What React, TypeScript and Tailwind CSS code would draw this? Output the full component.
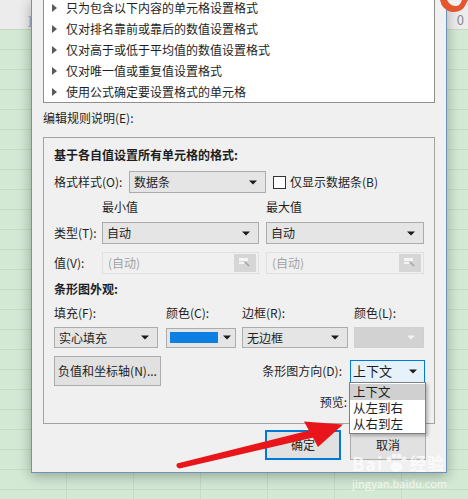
const font = "font-['Noto_Sans_CJK_SC','Noto_Sans',sans-serif]";

const rules = [
  "只为包含以下内容的单元格设置格式",
  "仅对排名靠前或靠后的数值设置格式",
  "仅对高于或低于平均值的数值设置格式",
  "仅对唯一值或重复值设置格式",
  "使用公式确定要设置格式的单元格",
];

// small black caret used by every combo box
const DownArrow = ({ color = "#1b1b1b" }: { color?: string }) => (
  <svg width="8" height="5" viewBox="0 0 8 5">
    <path d="M0 0.5h8L4 4.5z" fill={color} />
  </svg>
);

const Select = ({ text, className }: { text: string; className: string }) => (
  <div
    className={`flex items-center justify-between border border-[#acacac] bg-[#e5e5e5] pl-[4px] pr-[8px] ${className}`}
  >
    <span>{text}</span>
    <DownArrow />
  </div>
);

// the greyed "pick a range" button inside the value boxes
const RefPicker = () => (
  <div className="flex h-[18px] w-[22px] items-center justify-center bg-[#d6d6d6]">
    <svg width="14" height="12" viewBox="0 0 14 12">
      <rect x="1" y="1" width="9" height="3" fill="#f4f4f4" />
      <rect x="1" y="5" width="5" height="2" fill="#f4f4f4" />
      <path d="M7 5l4 4" stroke="#a5a5a5" strokeWidth="1.6" />
    </svg>
  </div>
);

const ValueBox = ({ className }: { className: string }) => (
  <div
    className={`flex items-center justify-between border border-[#e0e0e0] pl-[5px] pr-[2px] text-[#a2a2a2] ${className}`}
  >
    <span>(自动)</span>
    <RefPicker />
  </div>
);

const App = () => {
  return (
    <div
      className={`relative h-[499px] w-[468px] overflow-hidden bg-[#d3e9d4] text-[12px] leading-[14px] text-[#1e1e1e] ${font}`}
    >
      {/* spreadsheet behind the dialog */}
      <div className="flex h-[30px] items-end justify-between border-b border-[#c4d9c5] bg-[#ececec] pb-[2px] text-[#8a8a8a]">
        <span className="pl-[28px] text-[11px]">]</span>
        <span className="pr-[4px] text-[13px]">0</span>
      </div>
      <div className="h-[469px] bg-[image:repeating-linear-gradient(to_bottom,transparent_0px,transparent_19px,#c3dcc4_19px,#c3dcc4_20px),repeating-linear-gradient(to_right,transparent_0px,transparent_66px,#c3dcc4_66px,#c3dcc4_67px)]" />

      {/* dialog window */}
      <div className="absolute left-[31px] top-0 flex h-[473px] w-[416px] flex-col border-x border-b border-[#6d93bd] bg-[#f0f0f0] px-[11px] shadow-[0_3px_12px_rgba(0,0,0,0.3)]">
        {/* rule type list */}
        <div className="-mt-[4px] h-[107px] border border-[#8f8f8f] bg-white">
          {rules.map((r) => (
            <div key={r} className="flex h-[21px] items-center pl-[8px]">
              <svg width="5" height="8" viewBox="0 0 5 8">
                <path d="M0 0l5 4-5 4z" fill="#5a5a5a" />
              </svg>
              <span className="ml-[9px]">{r}</span>
            </div>
          ))}
        </div>

        <div className="mt-[8px] h-[14px]">编辑规则说明(E):</div>

        {/* rule description */}
        <div className="mt-[12px] flex h-[287px] flex-col border border-[#a3a3a3] pl-[10px] pr-[9px] pt-[9px]">
          <div className="h-[16px] font-bold leading-[16px]">
            基于各自值设置所有单元格的格式:
          </div>

          <div className="mt-[8px] flex h-[22px] items-center">
            <span className="w-[75px]">格式样式(O):</span>
            <Select text="数据条" className="h-[22px] w-[137px]" />
            <div className="ml-[7px] h-[13px] w-[13px] border border-[#333] bg-white" />
            <span className="ml-[4px]">仅显示数据条(B)</span>
          </div>

          <div className="mt-[7px] flex h-[14px]">
            <span className="ml-[48px] w-[164px]">最小值</span>
            <span>最大值</span>
          </div>

          <div className="mt-[8px] flex h-[22px] items-center">
            <span className="w-[48px]">类型(T):</span>
            <Select text="自动" className="h-[22px] w-[157px]" />
            <Select text="自动" className="ml-[7px] h-[22px] w-[158px]" />
          </div>

          <div className="mt-[8px] flex h-[22px] items-center">
            <span className="w-[48px]">值(V):</span>
            <ValueBox className="h-[22px] w-[157px]" />
            <ValueBox className="ml-[7px] h-[22px] w-[158px]" />
          </div>

          <div className="mt-[7px] h-[16px] font-bold leading-[16px]">条形图外观:</div>

          <div className="mt-[9px] flex h-[14px]">
            <span className="w-[112px]">填充(F):</span>
            <span className="w-[76px]">颜色(C):</span>
            <span className="w-[112px]">边框(R):</span>
            <span>颜色(L):</span>
          </div>

          <div className="mt-[7px] flex h-[21px] items-center">
            <Select text="实心填充" className="h-[21px] w-[104px]" />
            <div className="ml-[8px] flex h-[20px] w-[70px] items-center justify-between border border-[#acacac] bg-[#e5e5e5] pl-[3px] pr-[4px]">
              <div className="h-[11px] w-[48px] bg-[#0d7fe2]" />
              <DownArrow />
            </div>
            <Select text="无边框" className="ml-[6px] h-[21px] w-[106px]" />
            <div className="ml-[6px] flex h-[21px] w-[70px] items-center justify-end border border-[#d0d0d0] bg-[#d2d2d2] pr-[8px]">
              <DownArrow color="#f2f2f2" />
            </div>
          </div>

          <div className="mt-[8px] flex h-[30px] items-center">
            <div className="flex h-[30px] w-[107px] items-center justify-center border border-[#adadad] bg-[#e1e1e1]">
              负值和坐标轴(N)...
            </div>
            <div className="flex flex-1 items-center justify-end">
              <span>条形图方向(D):</span>
              <div className="ml-[8px] flex h-[23px] w-[75px] items-center justify-between border border-[#0078d7] bg-[#e5f1fb] pl-[2px] pr-[7px] text-[13px]">
                <span>上下文</span>
                <DownArrow />
              </div>
            </div>
          </div>

          <div className="mt-[9px] flex h-[14px] justify-end">
            <span className="mr-[78px]">预览:</span>
          </div>
        </div>

        {/* OK / Cancel */}
        <div className="mt-[6px] flex h-[30px] justify-end gap-[9px] pr-[9px]">
          <div className="flex w-[76px] items-center justify-center border-2 border-[#0078d7] bg-[#e1e1e1]">
            确定
          </div>
          <div className="flex w-[76px] items-center justify-center border border-[#adadad] bg-[#e1e1e1]">
            取消
          </div>
        </div>
      </div>

      {/* open drop-down of the direction box */}
      <div className="absolute left-[349px] top-[382px] w-[77px] border border-[#808080] bg-white py-[1px] text-[12.5px] leading-[16px] shadow-[2px_2px_3px_rgba(0,0,0,0.25)]">
        <div className="h-[16px] bg-[#d0d0d0] pl-[3px]">上下文</div>
        <div className="h-[16px] pl-[3px]">从左到右</div>
        <div className="h-[16px] pl-[3px]">从右到左</div>
      </div>

      {/* red pointer drawn on the screenshot */}
      <svg className="absolute left-0 top-0" width="468" height="499" viewBox="0 0 468 499">
        <path d="M177 463.5L311 430L313.5 437.5L179.5 468.5Q175 467 177 463.5z" fill="#e8161b" />
        <path d="M304 421.5L343 424.5L318 447z" fill="#e8161b" />
      </svg>

      {/* partial logo in the top right corner */}
      <svg className="absolute left-[438px] top-0" width="30" height="14" viewBox="0 0 30 14">
        <path d="M2 0Q4 10 14 12Q24 13 28 4L30 0z" fill="#e4572e" />
        <path d="M9 0Q12 6 18 6Q22 6 24 0z" fill="#f0f0f0" />
      </svg>

      {/* watermark */}
      <div className="absolute left-[352px] top-[453px] flex flex-col text-white opacity-70">
        <div className="flex items-center text-[18px] font-bold leading-[20px] tracking-[1px]">
          <span>Bai</span>
          <svg className="mx-[1px]" width="24" height="20" viewBox="0 0 24 20">
            <circle cx="5" cy="6" r="2.5" fill="white" />
            <circle cx="10" cy="3" r="2.5" fill="white" />
            <circle cx="15" cy="3" r="2.5" fill="white" />
            <circle cx="20" cy="6" r="2.5" fill="white" />
            <ellipse cx="12.5" cy="14" rx="6" ry="5" fill="white" />
          </svg>
          <span className="text-[17px]">经验</span>
        </div>
        <div className="mt-[4px] text-[11px] leading-[12px]">jingyan.baidu.com</div>
      </div>
    </div>
  );
};

export default App;
